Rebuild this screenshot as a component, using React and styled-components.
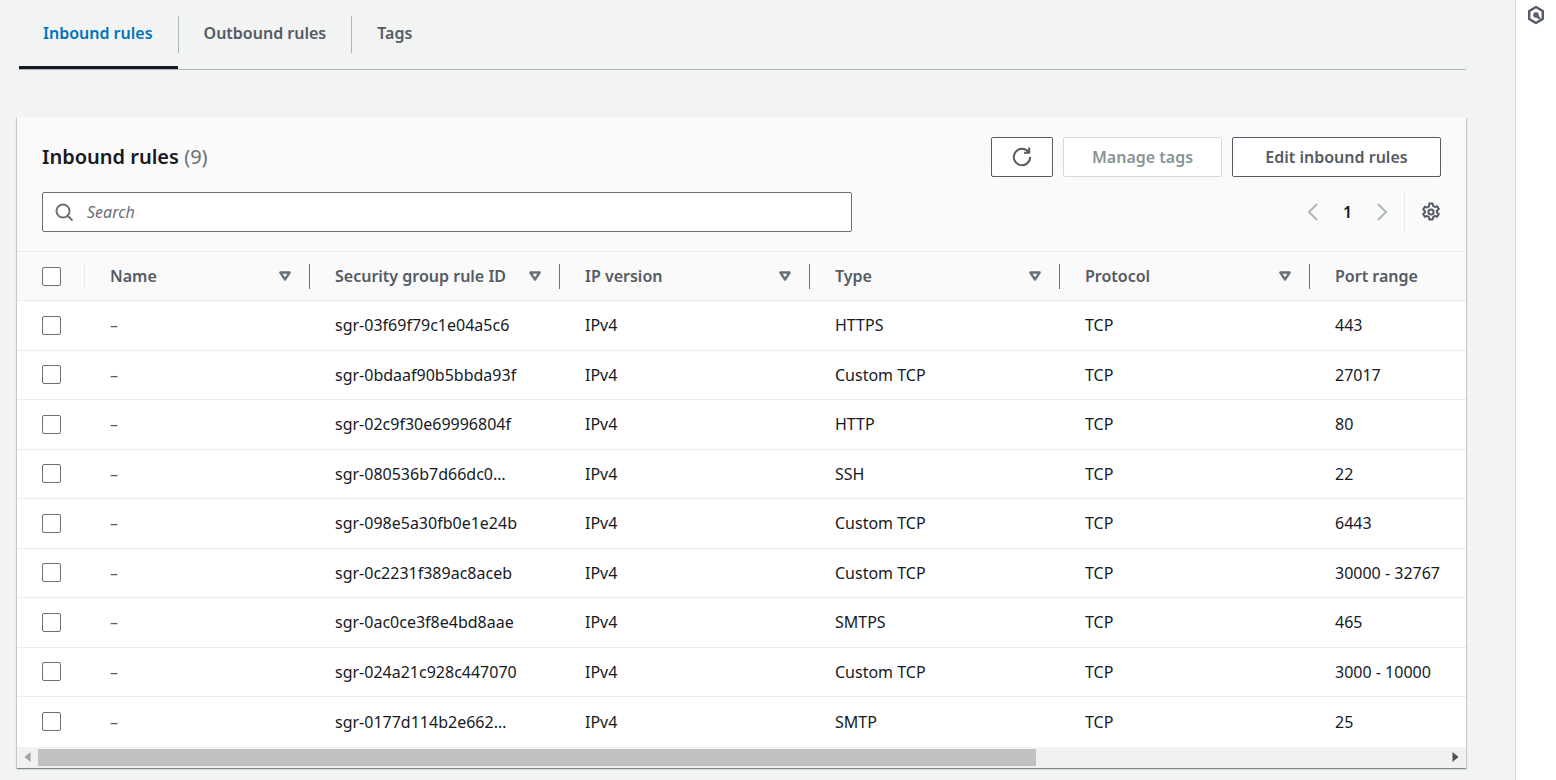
import React from 'react'
import styled, { createGlobalStyle } from 'styled-components'

const COLUMNS = '68px 225px 250px 250px 250px 250px 250px'

const rules = [
  ['sgr-03f69f79c1e04a5c6', 'HTTPS', '443'],
  ['sgr-0bdaaf90b5bbda93f', 'Custom TCP', '27017'],
  ['sgr-02c9f30e69996804f', 'HTTP', '80'],
  ['sgr-080536b7d66dc0…', 'SSH', '22'],
  ['sgr-098e5a30fb0e1e24b', 'Custom TCP', '6443'],
  ['sgr-0c2231f389ac8aceb', 'Custom TCP', '30000 - 32767'],
  ['sgr-0ac0ce3f8e4bd8aae', 'SMTPS', '465'],
  ['sgr-024a21c928c447070', 'Custom TCP', '3000 - 10000'],
  ['sgr-0177d114b2e662…', 'SMTP', '25'],
]

const columns = ['Name', 'Security group rule ID', 'IP version', 'Type', 'Protocol']

const SortIcon = () => (
  <SortSvg viewBox="0 0 12 10">
    <path d="M2 2h8L6 8z" fill="none" stroke="#687078" strokeWidth="2" strokeLinejoin="round" />
  </SortSvg>
)

export default function App() {
  return (
    <>
      <GlobalStyle />
      <Page>
        <Main>
          <Tabs>
            <Tab $active>Inbound rules</Tab>
            <Tab $divider>Outbound rules</Tab>
            <Tab $divider>Tags</Tab>
          </Tabs>
          <Card>
            <CardHeader>
              <TitleRow>
                <Title>
                  Inbound rules <Count>(9)</Count>
                </Title>
                <Actions>
                  <IconButton aria-label="Refresh">
                    <svg width="22" height="22" viewBox="0 0 22 22" fill="none" stroke="#545b64" strokeWidth="2">
                      <path d="M17.6 6.2A8.2 8.2 0 1 0 19.2 11" />
                      <path d="M18.2 1.6v5.2h-5.2" />
                    </svg>
                  </IconButton>
                  <Button disabled>Manage tags</Button>
                  <Button $wide>Edit inbound rules</Button>
                </Actions>
              </TitleRow>
              <FilterRow>
                <SearchBox>
                  <svg width="20" height="20" viewBox="0 0 20 20" fill="none" stroke="#687078" strokeWidth="2">
                    <circle cx="9" cy="9" r="6.5" />
                    <path d="M13.5 13.5l5 5" />
                  </svg>
                  <SearchInput placeholder="Search" />
                </SearchBox>
                <Pager>
                  <svg width="16" height="20" viewBox="0 0 16 20" fill="none" stroke="#aab7b8" strokeWidth="2">
                    <path d="M12 2L4 10l8 8" />
                  </svg>
                  <PageNumber>1</PageNumber>
                  <svg width="16" height="20" viewBox="0 0 16 20" fill="none" stroke="#aab7b8" strokeWidth="2">
                    <path d="M4 2l8 8-8 8" />
                  </svg>
                  <SettingsSlot>
                    <svg width="20" height="20" viewBox="0 0 20 20" fill="none" stroke="#545b64" strokeWidth="2" strokeLinejoin="round">
                      <circle cx="10" cy="10" r="2.6" />
                      <path d="M8.4 1.5h3.2l.5 2.5 1.7 1 2.4-.8 1.6 2.8-1.9 1.7v1.6l1.9 1.7-1.6 2.8-2.4-.8-1.7 1-.5 2.5H8.4l-.5-2.5-1.7-1-2.4.8-1.6-2.8 1.9-1.7V9.2L2.2 7.5l1.6-2.8 2.4.8 1.7-1z" />
                    </svg>
                  </SettingsSlot>
                </Pager>
              </FilterRow>
            </CardHeader>
            <TableClip>
              <HeadRow>
                <CheckCell $head>
                  <Checkbox />
                </CheckCell>
                {columns.map(name => (
                  <HeadCell key={name}>
                    <HeadLabel>{name}</HeadLabel>
                    <SortIcon />
                  </HeadCell>
                ))}
                <HeadCell $last>
                  <HeadLabel>Port range</HeadLabel>
                </HeadCell>
              </HeadRow>
              {rules.map(([id, type, port]) => (
                <Row key={id}>
                  <CheckCell>
                    <Checkbox />
                  </CheckCell>
                  <Cell $muted>–</Cell>
                  <Cell>{id}</Cell>
                  <Cell>IPv4</Cell>
                  <Cell>{type}</Cell>
                  <Cell>TCP</Cell>
                  <Cell>{port}</Cell>
                </Row>
              ))}
            </TableClip>
            <Scrollbar>
              <ScrollArrow viewBox="0 0 8 10">
                <path d="M7 0v10L1 5z" fill="#a3a3a3" />
              </ScrollArrow>
              <ScrollTrack>
                <ScrollThumb />
              </ScrollTrack>
              <ScrollArrow viewBox="0 0 8 10">
                <path d="M1 0v10l6-5z" fill="#505050" />
              </ScrollArrow>
            </Scrollbar>
          </Card>
        </Main>
        <SidePanel>
          <svg width="20" height="20" viewBox="0 0 20 20" fill="none" stroke="#545b64" strokeWidth="2.4" strokeLinejoin="round">
            <path d="M10 2l6.8 4v8L10 18l-6.8-4V6z" />
            <circle cx="10" cy="10" r="1.6" />
            <path d="M11 11l3 3" />
          </svg>
        </SidePanel>
      </Page>
    </>
  )
}

const GlobalStyle = createGlobalStyle`
  html, body {
    margin: 0;
    height: 100%;
    overflow: hidden;
  }
  body {
    font-family: 'Noto Sans', sans-serif;
    background: #f2f3f3;
  }
`

const Page = styled.div`
  display: flex;
  width: 1556px;
  height: 780px;
  overflow: hidden;
`

const Main = styled.div`
  width: 1515px;
  padding: 0 49px 0 17px;
  box-sizing: border-box;
`

const SidePanel = styled.div`
  flex: 1;
  display: flex;
  justify-content: center;
  padding-top: 5px;
  background: #fff;
  border-left: 1px solid #d5dbdb;
  box-sizing: border-box;
  height: 100%;
  align-items: flex-start;
`

const Tabs = styled.div`
  display: flex;
  height: 70px;
  margin-left: 2px;
  padding-top: 16px;
  box-sizing: border-box;
  border-bottom: 1px solid #aab7b8;
`

const Tab = styled.div`
  position: relative;
  height: 53px;
  padding: 5px 25px 0 ${p => (p.$divider ? 26 : 24)}px;
  box-sizing: border-box;
  font-size: 16px;
  line-height: 24px;
  font-weight: 600;
  color: ${p => (p.$active ? '#0073bb' : '#545b64')};
  border-bottom: ${p => (p.$active ? '3px solid #16191f' : 'none')};

  ${p => p.$divider && `
    &::before {
      content: '';
      position: absolute;
      left: 0;
      top: 0;
      height: 37px;
      width: 1px;
      background: #aab7b8;
    }
  `}
`

const Card = styled.div`
  margin-top: 47px;
  background: #fff;
  box-shadow: 0 1px 1px 0 rgba(0, 28, 36, 0.3), 1px 1px 1px 0 rgba(0, 28, 36, 0.15), -1px 1px 1px 0 rgba(0, 28, 36, 0.15);
`

const CardHeader = styled.div`
  background: #fafafa;
  padding: 20px 25px 20px 25px;
  height: 135px;
  box-sizing: border-box;
  border-bottom: 1px solid #eaeded;
`

const TitleRow = styled.div`
  display: flex;
  justify-content: space-between;
  align-items: center;
  height: 40px;
`

const Title = styled.h2`
  margin: 0;
  font-size: 20px;
  line-height: 36px;
  font-weight: 600;
  color: #16191f;
`

const Count = styled.span`
  font-weight: 400;
  color: #687078;
`

const Actions = styled.div`
  display: flex;
  gap: 10px;
`

const Button = styled.button`
  height: 40px;
  width: ${p => (p.$wide ? 209 : 159)}px;
  padding: 0;
  box-sizing: border-box;
  background: #fff;
  border: 1px solid ${p => (p.disabled ? '#d5dbdb' : '#545b64')};
  border-radius: 2px;
  font-family: inherit;
  font-size: 16px;
  font-weight: 600;
  color: ${p => (p.disabled ? '#879596' : '#545b64')};
`

const IconButton = styled(Button)`
  width: 62px;
  display: flex;
  align-items: center;
  justify-content: center;
`

const FilterRow = styled.div`
  display: flex;
  justify-content: space-between;
  align-items: center;
  margin-top: 15px;
`

const SearchBox = styled.div`
  display: flex;
  align-items: center;
  gap: 11px;
  width: 810px;
  height: 40px;
  padding-left: 11px;
  box-sizing: border-box;
  background: #fff;
  border: 1px solid #687078;
  border-radius: 2px;
`

const SearchInput = styled.input`
  flex: 1;
  border: none;
  outline: none;
  background: transparent;
  font-family: inherit;
  font-size: 16px;
  font-style: italic;

  &::placeholder {
    color: #687078;
    opacity: 1;
  }
`

const Pager = styled.div`
  display: flex;
  align-items: center;
  height: 40px;
`

const PageNumber = styled.span`
  width: 53px;
  text-align: center;
  font-size: 16px;
  font-weight: 600;
  color: #16191f;
`

const SettingsSlot = styled.div`
  display: flex;
  align-items: center;
  height: 40px;
  margin-left: 14px;
  padding-left: 16px;
  border-left: 1px solid #eaeded;
`

const TableClip = styled.div`
  overflow: hidden;
`

const HeadRow = styled.div`
  display: grid;
  grid-template-columns: ${COLUMNS};
  height: 49px;
  background: #fafafa;
  border-bottom: 1px solid #eaeded;
  box-sizing: border-box;
  align-items: center;
`

const HeadCell = styled.div`
  position: relative;
  display: flex;
  align-items: center;
  justify-content: space-between;
  height: 25px;
  padding: 0 17px 0 25px;
  box-sizing: border-box;
  border-right: ${p => (p.$last ? 'none' : '1px solid #687078')};
  font-size: 16px;
  font-weight: 600;
  color: #545b64;
  min-width: 0;
`

const HeadLabel = styled.span`
  overflow: hidden;
  white-space: nowrap;
  text-overflow: ellipsis;
  min-width: 0;
`

const SortSvg = styled.svg`
  flex: none;
  width: 14px;
  height: 12px;
  margin-left: 8px;
`

const Row = styled.div`
  display: grid;
  grid-template-columns: ${COLUMNS};
  height: 49.5px;
  box-sizing: border-box;
  background: #fff;
  border-bottom: 1px solid #eaeded;
  align-items: center;

  &:last-child {
    border-bottom: none;
  }
`

const CheckCell = styled.div`
  display: flex;
  align-items: center;
  height: 25px;
  padding-left: 25px;
  box-sizing: border-box;
  border-right: ${p => (p.$head ? '1px solid #eaeded' : 'none')};
`

const Checkbox = styled.span`
  display: block;
  width: 17px;
  height: 17px;
  background: #fff;
  border: 1px solid #687078;
  border-radius: 2px;
`

const Cell = styled.div`
  padding-left: 25px;
  font-size: 16px;
  line-height: 24px;
  color: ${p => (p.$muted ? '#545b64' : '#16191f')};
  white-space: nowrap;
`

const Scrollbar = styled.div`
  display: flex;
  align-items: center;
  height: 21px;
  background: #f1f1f1;
`

const ScrollArrow = styled.svg`
  flex: none;
  width: 21px;
  height: 10px;
`

const ScrollTrack = styled.div`
  flex: 1;
  height: 17px;
`

const ScrollThumb = styled.div`
  width: 998px;
  height: 100%;
  background: #c1c1c1;
`
